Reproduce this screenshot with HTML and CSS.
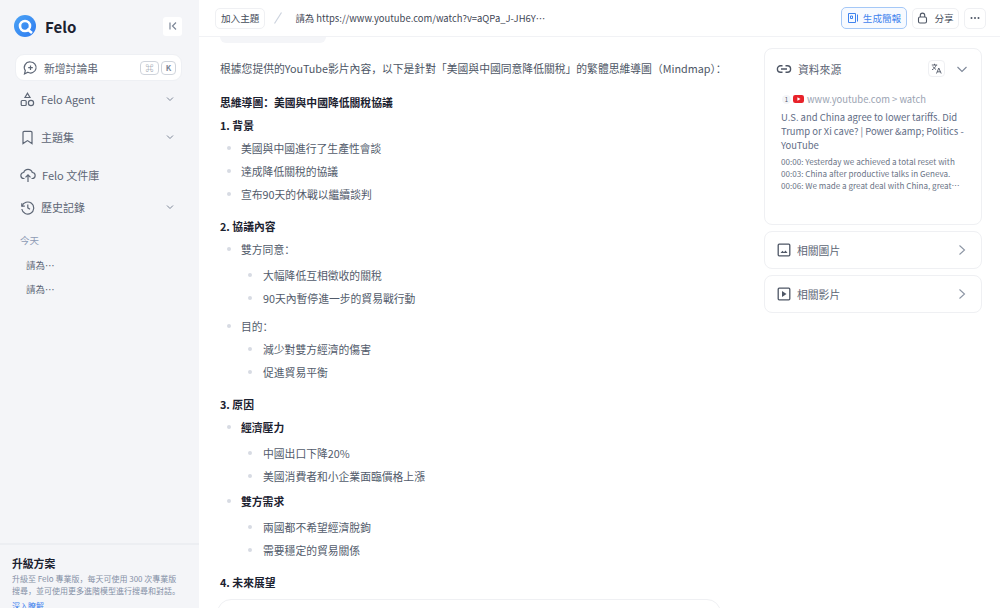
FILE: index.html
```html
<!DOCTYPE html>
<html lang="zh">
<head>
    <meta charset="UTF-8">
    <title>Felo</title>
    <link rel="stylesheet" href="styles.css">
</head>
<body>
    <aside class="sidebar">
        <div class="brand">
            <svg class="brand-icon" width="22" height="22" viewBox="0 0 22 22">
                <defs><linearGradient id="lg" x1="0" y1="0" x2="1" y2="1"><stop offset="0" stop-color="#4aa3f5"/><stop offset="1" stop-color="#2f7bf0"/></linearGradient></defs>
                <circle cx="11" cy="11" r="11" fill="url(#lg)"/>
                <circle cx="11" cy="11" r="5" fill="none" stroke="#fff" stroke-width="2.6"/>
                <path d="M13 14l5 4" stroke="#fff" stroke-width="2.6"/>
            </svg>
            <span class="brand-name">Felo</span>
            <button class="collapse">
                <svg width="10" height="10" viewBox="0 0 10 10" fill="none" stroke="#7d8798" stroke-width="1.2"><path d="M2 1.500v7M8 1.500L4.500 5 8 8.500"/></svg>
            </button>
        </div>
        <div class="new-thread">
            <svg width="16" height="16" viewBox="0 0 16 16" fill="none" stroke="#5d6675" stroke-width="1.2"><path d="M8.500 2a5.500 5.500 0 1 1-2.600 10.300L2.500 14l.8-3.400A5.500 5.500 0 0 1 8.500 2z"/><path d="M8.500 5.500v4.500M6.200 7.700h4.600"/></svg>
            <span class="new-label">新增討論串</span>
            <span class="key key-wide">⌘</span>
            <span class="key">K</span>
        </div>
        <nav class="side-nav">
            <a class="nav-item nav-agent">
                <svg width="15" height="15" viewBox="0 0 15 15" fill="none" stroke="#5d6675" stroke-width="1.2"><path d="M7.500 1.200L10 5.500H5z"/><rect x="1.200" y="8.500" width="5" height="5" rx="1"/><circle cx="11" cy="11" r="2.600"/></svg>
                <span>Felo Agent</span>
                <svg class="chev" width="8" height="8" viewBox="0 0 8 8" fill="none" stroke="#7d8798" stroke-width="1"><path d="M1 2.500l3 3 3-3"/></svg>
            </a>
            <a class="nav-item nav-topic">
                <svg width="15" height="15" viewBox="0 0 15 15" fill="none" stroke="#5d6675" stroke-width="1.2"><path d="M3 2.600a1.200 1.200 0 0 1 1.200-1.200h6.600A1.200 1.200 0 0 1 12 2.600v11l-4.500-3-4.500 3z"/></svg>
                <span>主題集</span>
                <svg class="chev" width="8" height="8" viewBox="0 0 8 8" fill="none" stroke="#7d8798" stroke-width="1"><path d="M1 2.500l3 3 3-3"/></svg>
            </a>
            <a class="nav-item nav-files">
                <svg width="16" height="15" viewBox="0 0 16 15" fill="none" stroke="#5d6675" stroke-width="1.2"><path d="M4.500 10.500H4a3 3 0 0 1-.3-6A4.500 4.500 0 0 1 12.300 4.500a3 3 0 0 1-.3 6h-.5"/><path d="M8 14V7M5.500 9.300L8 6.800l2.500 2.500"/></svg>
                <span>Felo 文件庫</span>
            </a>
            <a class="nav-item nav-history">
                <svg width="15" height="15" viewBox="0 0 15 15" fill="none" stroke="#5d6675" stroke-width="1.2"><path d="M1.800 3.200v3h3"/><path d="M2 6.200a6 6 0 1 1-.2 2.800"/><path d="M7.800 4.500v3.300l2.200 1.400"/></svg>
                <span>歷史記錄</span>
                <svg class="chev" width="8" height="8" viewBox="0 0 8 8" fill="none" stroke="#7d8798" stroke-width="1"><path d="M1 2.500l3 3 3-3"/></svg>
            </a>
        </nav>
        <div class="history">
            <div class="history-day">今天</div>
            <div class="history-link">請為⋯</div>
            <div class="history-link">請為⋯</div>
        </div>
        <div class="upgrade">
            <div class="upgrade-title">升級方案</div>
            <p>升級至 Felo 專業版，每天可使用 300 次專業版搜尋，並可使用更多進階模型進行搜尋和對話。</p>
            <a class="upgrade-link">深入瞭解</a>
        </div>
    </aside>

    <div class="page">
        <header class="topbar">
            <button class="btn">加入主題</button>
            <svg class="slash" width="10" height="12" viewBox="0 0 10 12" fill="none" stroke="#ccd3de" stroke-width="1.200"><path d="M1.500 11.500L8.500 .5"/></svg>
            <div class="crumb">請為 https://www.youtube.com/watch?v=aQPa_J-JH6Y⋯</div>
            <button class="btn btn-blue">
                <svg width="12" height="12" viewBox="0 0 12 12" fill="none" stroke="#3f83ee" stroke-width="1"><path d="M1.500 1.500h7v9h-7zM3.500 4h2v2.500h-2zM10.500 2.500v7"/></svg>
                生成簡報
            </button>
            <button class="btn btn-share">
                <svg width="11" height="12" viewBox="0 0 11 12" fill="none" stroke="#4e5665" stroke-width="1.100"><rect x="1.500" y="5" width="8" height="6" rx="1.500"/><path d="M3.300 5V3.300a2.200 2.200 0 0 1 4.400 0V5"/></svg>
                分享
            </button>
            <button class="btn btn-more">
                <svg width="10" height="4" viewBox="0 0 10 4" fill="#4e5665"><circle cx="1.500" cy="2" r="1"/><circle cx="5" cy="2" r="1"/><circle cx="8.500" cy="2" r="1"/></svg>
            </button>
        </header>

        <div class="content">
            <main class="answer">
                <div class="question-bubble"></div>
                <p class="intro">根據您提供的YouTube影片內容，以下是針對「美國與中國同意降低關稅」的繁體思維導圖（Mindmap）：</p>
                <h3 class="map-title">思維導圖：美國與中國降低關稅協議</h3>

                <h4>1. 背景</h4>
                <ul class="list">
                    <li>美國與中國進行了生產性會談</li>
                    <li>達成降低關稅的協議</li>
                    <li>宣布90天的休戰以繼續談判</li>
                </ul>

                <h4>2. 協議內容</h4>
                <ul class="list list-wide">
                    <li>雙方同意：
                        <ul class="sub">
                            <li>大幅降低互相徵收的關稅</li>
                            <li>90天內暫停進一步的貿易戰行動</li>
                        </ul>
                    </li>
                    <li>目的：
                        <ul class="sub sub-close">
                            <li>減少對雙方經濟的傷害</li>
                            <li>促進貿易平衡</li>
                        </ul>
                    </li>
                </ul>

                <h4>3. 原因</h4>
                <ul class="list list-tight">
                    <li><strong>經濟壓力</strong>
                        <ul class="sub">
                            <li>中國出口下降20%</li>
                            <li>美國消費者和小企業面臨價格上漲</li>
                        </ul>
                    </li>
                    <li><strong>雙方需求</strong>
                        <ul class="sub">
                            <li>兩國都不希望經濟脫鉤</li>
                            <li>需要穩定的貿易關係</li>
                        </ul>
                    </li>
                </ul>

                <h4>4. 未來展望</h4>
                <div class="ask-box"></div>
            </main>

            <aside class="rail">
                <section class="card sources">
                    <div class="card-head">
                        <svg width="16" height="16" viewBox="0 0 16 16" fill="none" stroke="#4e5665" stroke-width="1.400"><path d="M6.500 4.800H4.600a3.200 3.200 0 0 0 0 6.400h1.900M9.500 4.800h1.900a3.200 3.200 0 0 1 0 6.400H9.500M5 8h6"/></svg>
                        <span class="card-title">資料來源</span>
                        <span class="translate">
                            <svg width="11" height="11" viewBox="0 0 11 11" fill="none" stroke="#4e5665" stroke-width=".9"><path d="M.8 2h5.400M3.500.8V2M5.200 2C4.600 4 3 5.800 1 6.800M2 3.500c.7 1.300 1.800 2.300 3 3M5.500 10.500L7.800 5l2.400 5.500M6.300 8.800h3"/></svg>
                        </span>
                        <svg class="source-chev" width="12" height="12" viewBox="0 0 12 12" fill="none" stroke="#7d8798" stroke-width="1.100"><path d="M1.500 4l4.500 4.500L10.500 4"/></svg>
                    </div>
                    <div class="source-site">
                        <span class="source-num">1</span>
                        <svg width="11" height="8" viewBox="0 0 11 8"><rect width="11" height="8" rx="2.200" fill="#e8222a"/><path d="M4.400 2.200v3.600L7.500 4z" fill="#fff"/></svg>
                        <span class="source-url">www.youtube.com &gt; watch</span>
                    </div>
                    <div class="source-title">U.S. and China agree to lower tariffs. Did Trump or Xi cave? | Power &amp;amp; Politics - YouTube</div>
                    <div class="source-text">00:00: Yesterday we achieved a total reset with<br>00:03: China after productive talks in Geneva.<br>00:06: We made a great deal with China, great⋯</div>
                </section>
                <section class="card row-card">
                    <svg width="14" height="14" viewBox="0 0 14 14" fill="none" stroke="#4e5665" stroke-width="1.300"><rect x="1.200" y="1.200" width="11.600" height="11.600" rx="1"/><path d="M3.500 10l2-2.200 1.500 1.500 1.500-1.800 2 2.500z" fill="#4e5665" stroke="none"/></svg>
                    <span class="card-title">相關圖片</span>
                    <svg class="row-chev" width="10" height="12" viewBox="0 0 10 12" fill="none" stroke="#8c95a4" stroke-width="1.100"><path d="M2.500 1.500L7.500 6l-5 4.500"/></svg>
                </section>
                <section class="card row-card">
                    <svg width="14" height="14" viewBox="0 0 14 14" fill="none" stroke="#4e5665" stroke-width="1.300"><rect x="1.200" y="1.200" width="11.600" height="11.600" rx="1"/><path d="M5 4v6l4.500-3z" fill="#4e5665" stroke="none"/></svg>
                    <span class="card-title">相關影片</span>
                    <svg class="row-chev" width="10" height="12" viewBox="0 0 10 12" fill="none" stroke="#8c95a4" stroke-width="1.100"><path d="M2.500 1.500L7.500 6l-5 4.500"/></svg>
                </section>
            </aside>
        </div>
    </div>
</body>
</html>
```

FILE: styles.css
```css
* {
    box-sizing: border-box;
}
html, body {
    height: 100%;
}
body {
    margin: 0;
    display: flex;
    height: 608px;
    overflow: hidden;
    font-family: "Noto Sans CJK SC", "Noto Sans", sans-serif;
    font-size: 10.8px;
    color: #525b6b;
    background: #fff;
}
button {
    font-family: inherit;
}

/* sidebar */
.sidebar {
    width: 199px;
    flex-shrink: 0;
    height: 608px;
    overflow: hidden;
    display: flex;
    flex-direction: column;
    background: #f4f5f8;
}
.brand {
    display: flex;
    align-items: center;
    height: 53px;
    padding: 0 17px 1px 14px;
    flex-shrink: 0;
}
.brand-name {
    margin-left: 9px;
    font-size: 15px;
    font-weight: 600;
    color: #1c2230;
}
.collapse {
    margin-left: auto;
    width: 19px;
    height: 19px;
    padding: 0;
    display: flex;
    align-items: center;
    justify-content: center;
    border: none;
    border-radius: 3px;
    background: #fff;
}
.new-thread {
    display: flex;
    align-items: center;
    gap: 2px;
    height: 27px;
    margin: 1px 17px 0 15px;
    padding: 0 5px 0 6px;
    background: #fff;
    border-radius: 9px;
    border: 1px solid #eef0f4;
}
.new-label {
    margin-left: 4px;
    margin-right: auto;
    color: #5d6675;
}
.key {
    width: 15px;
    height: 14px;
    display: flex;
    align-items: center;
    justify-content: center;
    font-size: 8px;
    font-weight: 600;
    color: #7d8798;
    border: 1px solid #cfd4dc;
    border-radius: 4px;
}
.key-wide {
    width: 19px;
}
.side-nav {
    display: flex;
    flex-direction: column;
    padding: 0 25px 0 20px;
}
.nav-item {
    display: flex;
    align-items: center;
    gap: 6px;
    color: #5d6675;
    font-size: 11px;
}
.nav-item .chev {
    margin-left: auto;
}
.nav-agent { margin-top: 9px; height: 18px; }
.nav-topic { margin-top: 20px; height: 18px; }
.nav-files { margin-top: 20px; height: 18px; }
.nav-history { margin-top: 14px; height: 18px; }
.history {
    padding: 0 20px;
    font-size: 9.500px;
}
.history-day {
    margin-top: 17px;
    color: #8c9ab5;
}
.history-link {
    margin-top: 10px;
    padding-left: 6px;
    line-height: 14px;
    color: #5d6675;
}
.history-day + .history-link {
    margin-top: 11px;
}
.upgrade {
    margin-top: auto;
    flex-shrink: 0;
    height: 65px;
    padding: 11px 12px 0;
    border-top: 2px solid #eceef2;
    overflow: hidden;
}
.upgrade-title {
    font-size: 10.800px;
    font-weight: 700;
    line-height: 15px;
    color: #1c2230;
}
.upgrade p {
    margin: 2px 6px 0 0;
    font-size: 8px;
    line-height: 11.500px;
    color: #8490a6;
}
.upgrade-link {
    display: block;
    margin-top: 4px;
    font-size: 8px;
    color: #3f83ee;
}

/* top bar */
.page {
    flex: 1;
    min-width: 0;
    display: flex;
    flex-direction: column;
}
.topbar {
    display: flex;
    align-items: center;
    height: 37px;
    flex-shrink: 0;
    padding: 0 14px 0 16px;
    border-bottom: 1px solid #f1f2f5;
}
.btn {
    display: flex;
    align-items: center;
    justify-content: center;
    gap: 6px;
    height: 21px;
    padding: 0 5px;
    font-size: 9.600px;
    white-space: nowrap;
    color: #444c5a;
    background: #fff;
    border: 1px solid #eff0f3;
    border-radius: 5px;
}
.slash {
    margin-left: 8px;
}
.crumb {
    margin-left: 12px;
    margin-right: auto;
    font-size: 9.450px;
    color: #3f4755;
}
.btn-blue {
    width: 66px;
    height: 22px;
    gap: 4px;
    padding: 0;
    color: #3f83ee;
    border-color: #a5c8f7;
    background: #f7faff;
}
.btn-share {
    width: 47px;
    margin-left: 5px;
    padding: 0;
}
.btn-more {
    width: 22px;
    margin-left: 5px;
    padding: 0;
}

/* answer */
.content {
    flex: 1;
    min-height: 0;
    display: flex;
    overflow: hidden;
}
.answer {
    width: 565px;
    flex-shrink: 0;
    padding-left: 21px;
    line-height: 16px;
}
.question-bubble {
    width: 106px;
    height: 6px;
    background: #f4f5f8;
    border-radius: 0 0 8px 8px;
}
.intro {
    margin: 17px 0 0;
    white-space: nowrap;
    color: #4d5665;
}
.map-title, h4 {
    font-size: 10.800px;
    font-weight: 700;
    color: #1c2230;
}
.map-title {
    margin: 18px 0 0;
}
h4 {
    margin: 16px 0 0;
}
.map-title + h4 {
    margin-top: 7px;
}
.list, .sub {
    list-style: none;
    margin: 0;
    padding: 0;
}
.list > li, .sub > li {
    position: relative;
}
.list > li::before, .sub > li::before {
    content: "";
    position: absolute;
    width: 4px;
    height: 4px;
    top: 6px;
    left: 7px;
    border-radius: 50%;
    background: #d7dbe3;
}
.list > li {
    margin-top: 7px;
    padding-left: 21px;
}
.list-wide > li + li {
    margin-top: 12px;
}
.list-tight > li + li {
    margin-top: 9px;
}
.sub {
    margin-top: 10px;
}
.sub-close {
    margin-top: 7px;
}
.sub > li {
    padding-left: 22px;
}
.sub > li + li {
    margin-top: 7px;
}
.list strong {
    font-weight: 700;
    color: #1c2230;
}
.ask-box {
    width: 504px;
    height: 30px;
    margin: 9px 0 0 -3px;
    border: 1px solid #eff0f3;
    border-radius: 14px;
}

/* right rail */
.rail {
    width: 218px;
    flex-shrink: 0;
    padding-top: 11px;
    display: flex;
    flex-direction: column;
    gap: 6px;
}
.card {
    width: 218px;
    background: #fff;
    border: 1px solid #eff0f3;
    border-radius: 8px;
}
.sources {
    height: 177px;
    padding: 12px 13px 0 11px;
}
.card-head {
    display: flex;
    align-items: center;
    height: 15px;
    gap: 6px;
}
.card-title {
    font-size: 10.800px;
    color: #5d6675;
}
.translate {
    margin-left: auto;
    width: 17px;
    height: 17px;
    display: flex;
    align-items: center;
    justify-content: center;
    border: 1px solid #eff0f3;
    border-radius: 4px;
}
.source-chev {
    margin-left: 5px;
}
.source-site {
    display: flex;
    align-items: center;
    gap: 2px;
    margin-top: 16px;
    padding-left: 6px;
}
.source-num {
    width: 9px;
    height: 9px;
    display: flex;
    align-items: center;
    justify-content: center;
    font-size: 6px;
    border-radius: 50%;
    background: #f4f5f8;
}
.source-url {
    margin-left: 1px;
    font-size: 9.450px;
    color: #9aa3b2;
}
.source-title {
    margin-top: 4px;
    padding-left: 5px;
    font-size: 9.450px;
    line-height: 14px;
    color: #5f6d86;
}
.source-text {
    margin-top: 4px;
    padding-left: 5px;
    font-size: 8.100px;
    line-height: 12px;
    color: #6a7486;
}
.row-card {
    height: 38px;
    display: flex;
    align-items: center;
    gap: 6px;
    padding: 0 14px 0 12px;
}
.row-chev {
    margin-left: auto;
}
```
